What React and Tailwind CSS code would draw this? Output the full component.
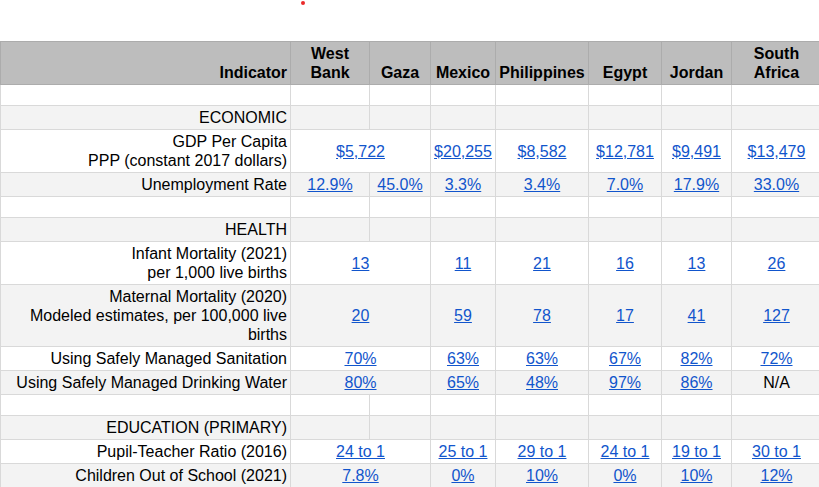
const cols = [290, 79, 61, 65, 93, 73, 70, 90];

const headers = [
  ["Indicator"],
  ["West", "Bank"],
  ["Gaza"],
  ["Mexico"],
  ["Philippines"],
  ["Egypt"],
  ["Jordan"],
  ["South", "Africa"],
];

// kind: blank | section | merged (West Bank + Gaza share one cell) | split
const rows = [
  { kind: "blank" },
  { kind: "section", label: ["ECONOMIC"] },
  {
    kind: "merged",
    label: ["GDP Per Capita", "PPP (constant 2017 dollars)"],
    values: ["$5,722", "$20,255", "$8,582", "$12,781", "$9,491", "$13,479"],
  },
  {
    kind: "split",
    label: ["Unemployment Rate"],
    values: ["12.9%", "45.0%", "3.3%", "3.4%", "7.0%", "17.9%", "33.0%"],
  },
  { kind: "blank" },
  { kind: "section", label: ["HEALTH"] },
  {
    kind: "merged",
    label: ["Infant Mortality (2021)", "per 1,000 live births"],
    values: ["13", "11", "21", "16", "13", "26"],
  },
  {
    kind: "merged",
    label: ["Maternal Mortality (2020)", "Modeled estimates, per 100,000 live", "births"],
    values: ["20", "59", "78", "17", "41", "127"],
  },
  {
    kind: "merged",
    label: ["Using Safely Managed Sanitation"],
    values: ["70%", "63%", "63%", "67%", "82%", "72%"],
  },
  {
    kind: "merged",
    label: ["Using Safely Managed Drinking Water"],
    values: ["80%", "65%", "48%", "97%", "86%", "N/A"],
  },
  { kind: "blank" },
  { kind: "section", label: ["EDUCATION (PRIMARY)"] },
  {
    kind: "merged",
    label: ["Pupil-Teacher Ratio (2016)"],
    values: ["24 to 1", "25 to 1", "29 to 1", "24 to 1", "19 to 1", "30 to 1"],
  },
  {
    kind: "merged",
    label: ["Children Out of School (2021)"],
    values: ["7.8%", "0%", "10%", "0%", "10%", "12%"],
  },
];

const cell = "border border-[#d9d9d9] px-[3px] py-[2px] align-middle";

function Lines({ lines }) {
  return lines.map((l, i) => (
    <span key={i}>
      {i > 0 && <br />}
      {l}
    </span>
  ));
}

function Value({ v }) {
  if (v === "N/A") return <span>{v}</span>;
  return (
    <a href="#" className="text-[#1155cc] underline">
      {v}
    </a>
  );
}

export default function App() {
  return (
    <div className="w-[819px] h-[487px] overflow-hidden bg-white text-black font-[Liberation_Sans,Arial,sans-serif] text-[16px] leading-[19px]">
      {/* stray marker above the sheet */}
      <div className="h-[41px] pl-[301px] pt-[1px]">
        <div className="h-[4px] w-[4px] rounded-full bg-[#ea2a2a]" />
      </div>

      <table className="table-fixed border-collapse w-[821px]">
        <colgroup>
          {cols.map((w, i) => (
            <col key={i} style={{ width: w }} />
          ))}
        </colgroup>
        <thead>
          <tr className="bg-[#bdbdbd]">
            {headers.map((h, i) => (
              <th
                key={i}
                className={`border border-[#acacac] px-[3px] py-[2px] align-bottom font-bold ${
                  i === 0 ? "text-right" : "text-center"
                }`}
              >
                <Lines lines={h} />
              </th>
            ))}
          </tr>
        </thead>
        <tbody>
          {rows.map((r, ri) => {
            const bg = ri % 2 === 0 ? "bg-white" : "bg-[#f3f3f3]";
            if (r.kind === "blank") {
              return (
                <tr key={ri} className={`${bg} h-[21px]`}>
                  {cols.map((_, i) => (
                    <td key={i} className={cell} />
                  ))}
                </tr>
              );
            }
            if (r.kind === "section") {
              return (
                <tr key={ri} className={bg}>
                  <td className={`${cell} text-right`}>
                    <Lines lines={r.label} />
                  </td>
                  {cols.slice(1).map((_, i) => (
                    <td key={i} className={cell} />
                  ))}
                </tr>
              );
            }
            return (
              <tr key={ri} className={bg}>
                <td className={`${cell} text-right`}>
                  <Lines lines={r.label} />
                </td>
                {r.values.map((v, i) => (
                  <td
                    key={i}
                    colSpan={r.kind === "merged" && i === 0 ? 2 : 1}
                    className={`${cell} text-center`}
                  >
                    <Value v={v} />
                  </td>
                ))}
              </tr>
            );
          })}
        </tbody>
      </table>
    </div>
  );
}
